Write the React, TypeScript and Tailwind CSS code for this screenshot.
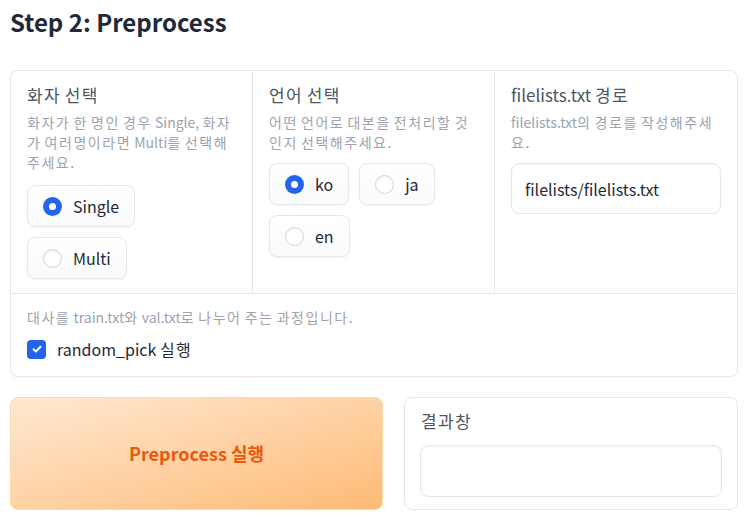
import React from 'react';

const font = { fontFamily: '"Noto Sans CJK KR", "Noto Sans", sans-serif' };

function Ko({ text, wide }: { text: string; wide?: boolean }) {
  const cls = wide ? 'tracking-[0.11em]' : 'tracking-[0.08em]';
  return (
    <>
      {Array.from(text).map((ch, i) =>
        /[\uAC00-\uD7A3]/.test(ch) ? (
          <span key={i} className={cls}>
            {ch}
          </span>
        ) : (
          <React.Fragment key={i}>{ch}</React.Fragment>
        )
      )}
    </>
  );
}

function Radio({ label, checked }: { label: string; checked?: boolean }) {
  return (
    <div className="flex h-[42px] items-center gap-[11px] rounded-lg border border-[#e5e7eb] bg-gradient-to-b from-white to-[#f9fafb] pl-[15px] pr-[15px] shadow-[0_1px_2px_rgba(0,0,0,0.05)]">
      {checked ? (
        <span className="flex h-[19px] w-[19px] items-center justify-center rounded-full bg-[#2563eb]">
          <span className="h-[7px] w-[7px] rounded-full bg-white" />
        </span>
      ) : (
        <span className="h-[19px] w-[19px] rounded-full border border-[#d1d5db] bg-white shadow-[inset_0_1px_2px_rgba(0,0,0,0.06)]" />
      )}
      <span className="text-[16px] leading-none text-[#1f2937]">{label}</span>
    </div>
  );
}

function Label({ text }: { text: string }) {
  return (
    <div className="text-[17px] leading-[24px] text-[#4b5563]">
      <Ko text={text} />
    </div>
  );
}

function Info({ text }: { text: string }) {
  return (
    <div className="mt-[5px] break-all text-[14px] leading-[20px] text-[#9ca3af]">
      <Ko text={text} wide />
    </div>
  );
}

export default function App() {
  return (
    <div className="h-[518px] w-[748px] overflow-hidden bg-white px-[10px]" style={font}>
      <h1 className="pt-[4px] text-[24px] font-semibold leading-[36px] text-[#1f2937]">Step 2: Preprocess</h1>

      <div className="mt-[30px] rounded-lg border border-[#e5e7eb] bg-white shadow-[0_1px_2px_rgba(0,0,0,0.04)]">
        <div className="grid h-[222px] grid-cols-3">
          <div className="border-r border-[#e5e7eb] px-[16px] pt-[12px]">
            <Label text="화자 선택" />
            <Info text="화자가 한 명인 경우 Single, 화자가 여러명이라면 Multi를 선택해주세요." />
            <div className="mt-[13px] flex flex-wrap gap-[10px]">
              <Radio label="Single" checked />
              <Radio label="Multi" />
            </div>
          </div>
          <div className="border-r border-[#e5e7eb] px-[16px] pt-[12px]">
            <Label text="언어 선택" />
            <Info text="어떤 언어로 대본을 전처리할 것인지 선택해주세요." />
            <div className="mt-[11px] flex flex-wrap gap-[10px]">
              <Radio label="ko" checked />
              <Radio label="ja" />
              <Radio label="en" />
            </div>
          </div>
          <div className="px-[16px] pt-[12px]">
            <Label text="filelists.txt 경로" />
            <Info text="filelists.txt의 경로를 작성해주세요." />
            <div className="mt-[11px] flex h-[51px] items-center rounded-lg border border-[#e5e7eb] bg-white px-[13px] text-[16px] text-[#1f2937] shadow-[inset_0_1px_2px_rgba(0,0,0,0.05)]">
              filelists/filelists.txt
            </div>
          </div>
        </div>
        <div className="border-t border-[#e5e7eb] px-[16px] pb-[15px] pt-[13px]">
          <div className="text-[14px] leading-[20px] text-[#9ca3af]">
            <Ko text="대사를 train.txt와 val.txt로 나누어 주는 과정입니다." wide />
          </div>
          <div className="mt-[10px] flex h-[24px] items-center gap-[11px]">
            <span className="flex h-[19px] w-[19px] items-center justify-center rounded-[4px] bg-[#2563eb]">
              <svg width="12" height="12" viewBox="0 0 24 24" fill="none" stroke="white" strokeWidth="4" strokeLinecap="round" strokeLinejoin="round">
                <path d="M5 12.5l4.5 4.5L19 7.5" />
              </svg>
            </span>
            <span className="text-[16px] text-[#1f2937]">
              <Ko text="random_pick 실행" />
            </span>
          </div>
        </div>
      </div>

      <div className="mt-[20px] flex gap-[21px]">
        <button className="flex h-[113px] w-[373px] items-center justify-center rounded-lg border border-[#fed7aa] bg-gradient-to-br from-[#ffe9d2] to-[#fdba74] text-[18px] font-semibold text-[#ea580c]">
          Preprocess 실행
        </button>
        <div className="h-[113px] flex-1 rounded-lg border border-[#e5e7eb] bg-white px-[15px] pt-[11px]">
          <div className="pl-[1px]">
            <Label text="결과창" />
          </div>
          <div className="mt-[12px] h-[52px] rounded-lg border border-[#e5e7eb] bg-white shadow-[inset_0_1px_3px_rgba(0,0,0,0.06)]" />
        </div>
      </div>
    </div>
  );
}
